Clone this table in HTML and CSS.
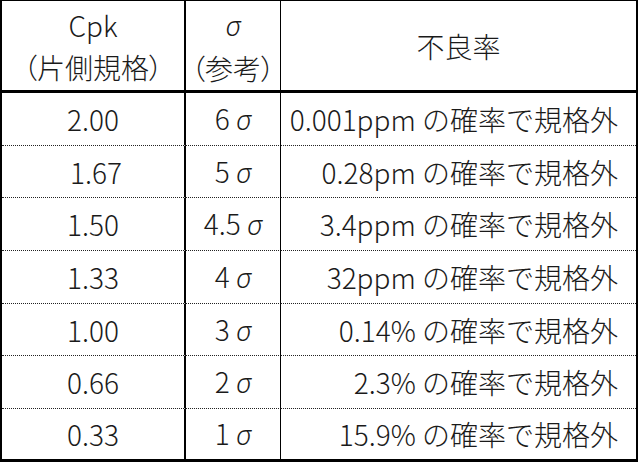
FILE: index.html
```html
<!DOCTYPE html>
<html lang="ja">
<head>
<meta charset="utf-8">
<link rel="stylesheet" href="styles.css">
</head>
<body>
<table class="cpk">
  <thead>
    <tr>
      <th class="c1">Cpk<br>（片側規格）</th>
      <th class="c2"><span class="sig">σ</span><br>（参考）</th>
      <th class="c3">不良率</th>
    </tr>
  </thead>
  <tbody>
    <tr><td class="c1">2.00</td><td class="c2">6 <span class="sig">σ</span></td><td class="c3">0.001ppm の確率で規格外</td></tr>
    <tr><td class="c1">&nbsp;1.67</td><td class="c2">5 <span class="sig">σ</span></td><td class="c3">0.28pm の確率で規格外</td></tr>
    <tr><td class="c1">1.50</td><td class="c2">4.5 <span class="sig">σ</span></td><td class="c3">3.4ppm の確率で規格外</td></tr>
    <tr><td class="c1">1.33</td><td class="c2">4 <span class="sig">σ</span></td><td class="c3">32ppm の確率で規格外</td></tr>
    <tr><td class="c1">1.00</td><td class="c2">3 <span class="sig">σ</span></td><td class="c3">0.14% の確率で規格外</td></tr>
    <tr><td class="c1">0.66</td><td class="c2">2 <span class="sig">σ</span></td><td class="c3">2.3% の確率で規格外</td></tr>
    <tr><td class="c1">0.33</td><td class="c2">1 <span class="sig">σ</span></td><td class="c3">15.9% の確率で規格外</td></tr>
  </tbody>
</table>
</body>
</html>
```

FILE: styles.css
```css
html, body {
  margin: 0;
  padding: 0;
  background: #ffffff;
}

.cpk {
  border-collapse: separate;
  border-spacing: 0;
  table-layout: fixed;
  width: 638px;
  border-top: 1px solid #000;
  border-left: 2px solid #000;
  border-right: 2px solid #000;
  border-bottom: 3px solid #000;
  font-family: "Noto Sans CJK JP", "Noto Sans", sans-serif;
  font-weight: 300;
  font-size: 28px;
  color: #1a1a1a;
}

.cpk th,
.cpk td {
  padding: 0;
  vertical-align: middle;
  font-weight: 300;
  white-space: nowrap;
  overflow: hidden;
}

.cpk th {
  height: 89px;
  line-height: 42px;
  border-bottom: 3px solid #000;
  text-align: center;
  font-feature-settings: "palt";
}

.cpk td {
  height: 51.7px;
  line-height: 30px;
  border-bottom: 1px dotted #222;
}

.cpk tbody tr:last-child td {
  height: 50px;
  border-bottom: none;
}

.c1 {
  width: 182px;
  border-right: 2px solid #000;
  text-align: center;
}

.c2 {
  width: 94px;
  border-right: 1px solid #000;
  text-align: center;
}

.c3 {
  text-align: right;
}

.cpk td.c3 {
  padding-right: 18px;
}

.cpk th.c3 {
  text-align: center;
}

.sig {
  font-family: "Noto Sans", "DejaVu Sans", sans-serif;
  font-style: italic;
  font-weight: 300;
  font-size: 27px;
}
```
